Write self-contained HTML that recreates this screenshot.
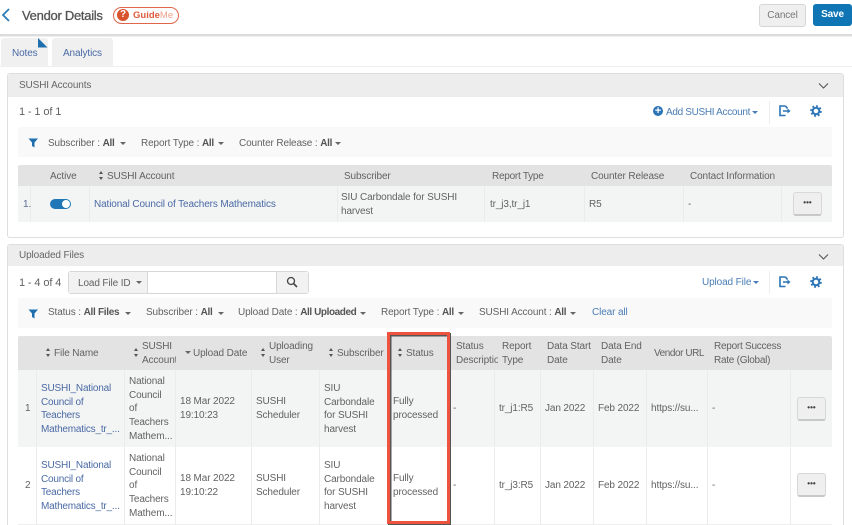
<!DOCTYPE html>
<html><head><meta charset="utf-8"><style>
html,body{margin:0;padding:0;background:#fff;overflow:hidden;width:852px;height:525px}
#w{position:absolute;left:0;top:0;width:852px;height:525px;overflow:hidden;font-family:"Liberation Sans",sans-serif;font-size:10px;letter-spacing:-.12px;line-height:13.7px;color:#626262;filter:blur(.3px)}
#w div,#w svg{position:absolute}
#w .t{white-space:nowrap;margin-top:3px}
.l{color:#4a6aa5}
#w .b{color:#4a7db5}
b{font-weight:bold;color:#555;letter-spacing:-.3px}
#w .car{width:0;height:0;border:3px solid transparent;border-top:3px solid #666;border-bottom:0}
#w .sort{width:5px;height:10px}
.sort:before{content:"";position:absolute;left:0;top:0;border:2.5px solid transparent;border-bottom:3.5px solid #555;border-top:0}
.sort:after{content:"";position:absolute;left:0;top:5.500px;border:2.5px solid transparent;border-top:3.5px solid #555;border-bottom:0}
#w .sep{width:1px;background:#eaecec}
#w .dots{width:27px;height:21px;background:#efefef;border:1px solid #d8d8d8;border-bottom:2px solid #c8c8c8;border-radius:3px;text-align:center;color:#444;font-weight:bold;font-size:8px;line-height:20px;letter-spacing:0}
</style></head><body><div id="w">
<!-- header -->
<svg style="left:0;top:7px" width="12" height="16" viewBox="0 0 12 16"><path d="M9 2 L3 8 L9 14" fill="none" stroke="#2a7fb8" stroke-width="1.800"/></svg>
<div class="t" style="left:22px;top:4px;font-size:13px;line-height:17px;color:#555;letter-spacing:-.28px;-webkit-text-stroke:.3px #555">Vendor Details</div>
<div style="left:113px;top:7px;width:64px;height:15px;border:1px solid #e0654a;border-radius:9px"></div>
<div style="left:117px;top:9px;width:12px;height:12px;border-radius:50%;background:#d9532f;color:#fff;font-size:10px;line-height:12px;text-align:center;font-weight:bold">?</div>
<div class="t" style="left:133px;top:7px;font-size:9.5px;line-height:12px;font-weight:bold;color:#dd5c3c;letter-spacing:0">Guide<span style="font-weight:normal;color:#eba08c">Me</span></div>
<div style="left:759px;top:4px;width:45px;height:21px;background:#efefef;border:1px solid #d6d6d6;border-radius:3px;text-align:center;line-height:21px;color:#777">Cancel</div>
<div style="left:813px;top:4px;width:39px;height:22px;background:#0f75b5;border-radius:3px;text-align:center;line-height:22px;color:#fff;font-weight:bold;font-size:10px">Save</div>
<div style="left:0;top:34px;width:852px;height:2px;background:#dcdcdc"></div>
<div style="left:0;top:36px;width:852px;height:1px;background:#efefef"></div>
<!-- tabs -->
<div style="left:1px;top:38px;width:47px;height:28px;background:#f0f0f0;border-radius:3px 3px 0 0"></div>
<div style="left:52px;top:38px;width:61px;height:28px;background:#f0f0f0;border-radius:3px 3px 0 0"></div>
<svg style="left:38px;top:38px" width="10" height="10"><path d="M0 0 L9.500 9.500 L0 9.500 Z" fill="#1f6fae"/></svg>
<div class="t l" style="left:12px;top:44px">Notes</div>
<div class="t l" style="left:63px;top:44px">Analytics</div>
<div style="left:0;top:66px;width:852px;height:1px;background:#eeeeee"></div>
<!-- panel 1 -->
<div style="left:7px;top:73px;width:835px;height:163px;border:1px solid #dedede;border-radius:3px"></div>
<div style="left:8px;top:74px;width:835px;height:23px;background:#ededed"></div>
<div class="t" style="left:19px;top:76px;color:#666">SUSHI Accounts</div>
<svg style="left:818px;top:82px" width="11" height="8"><path d="M1 1.500 L5.500 6 L10 1.500" fill="none" stroke="#555" stroke-width="1.100"/></svg>
<div class="t" style="left:19px;top:103px;font-size:11px">1 - 1 of 1</div>
<div style="left:653px;top:106px;width:10px;height:10px;border-radius:50%;background:#2a73b5;color:#fff;font-size:11px;line-height:10px;text-align:center;font-weight:bold">+</div>
<div class="t b" style="left:666px;top:103px;letter-spacing:-.32px">Add SUSHI Account</div>
<div class="car" style="left:752px;top:111px;border-top-color:#4a7db5"></div>
<div style="left:769px;top:101px;width:1px;height:23px;background:#eee"></div>
<svg style="left:778px;top:105px" width="13" height="12" viewBox="0 0 13 12"><path d="M7.500 1 H2 V10.500 H7.500" fill="none" stroke="#2a73b5" stroke-width="1.600"/><path d="M7.500 1 L9.500 3.500 M5 6 H10" fill="none" stroke="#2a73b5" stroke-width="1.600"/><path d="M9.500 3.500 L12.500 6 L9.500 8.500 Z" fill="#2a73b5"/></svg>
<svg style="left:810px;top:105px" width="12" height="12" viewBox="0 0 12 12"><circle cx="6" cy="6" r="3.300" fill="none" stroke="#2a73b5" stroke-width="2"/><circle cx="6" cy="6" r="5" fill="none" stroke="#2a73b5" stroke-width="1.600" stroke-dasharray="2 1.900"/></svg>
<!-- filter 1 -->
<div style="left:18px;top:127px;width:814px;height:30px;background:#f9f9f9"></div>
<svg style="left:28px;top:138px" width="11" height="10"><path d="M0.500 0.500 H10 L6.500 4.500 V9.500 L4 8 V4.500 Z" fill="#1f6fae"/></svg>
<div class="t" style="left:48px;top:134px">Subscriber : <b>All</b></div>
<div class="car" style="left:120px;top:142px"></div>
<div class="t" style="left:141px;top:134px">Report Type : <b>All</b></div>
<div class="car" style="left:218px;top:142px"></div>
<div class="t" style="left:239px;top:134px">Counter Release : <b>All</b></div>
<div class="car" style="left:335px;top:142px"></div>
<!-- table 1 -->
<div style="left:18px;top:165px;width:814px;height:21px;background:#e3e3e3;border-radius:2px 2px 0 0"></div>
<div style="left:18px;top:186px;width:814px;height:36px;background:#f3f4f4"></div>
<div class="sep" style="left:30px;top:186px;height:36px"></div>
<div class="sep" style="left:89px;top:186px;height:36px"></div>
<div class="sep" style="left:337px;top:186px;height:36px"></div>
<div class="sep" style="left:484px;top:186px;height:36px"></div>
<div class="sep" style="left:584px;top:186px;height:36px"></div>
<div class="sep" style="left:683px;top:186px;height:36px"></div>
<div class="sep" style="left:781px;top:186px;height:36px"></div>
<div class="t" style="left:50px;top:167px">Active</div>
<div class="sort" style="left:99px;top:171px"></div>
<div class="t" style="left:107px;top:167px">SUSHI Account</div>
<div class="t" style="left:344px;top:167px">Subscriber</div>
<div class="t" style="left:492px;top:167px;letter-spacing:-.25px">Report Type</div>
<div class="t" style="left:591px;top:167px">Counter Release</div>
<div class="t" style="left:690px;top:167px">Contact Information</div>
<div class="t" style="left:23px;top:195px;color:#5a6f96">1.</div>
<div style="left:50px;top:199px;width:21px;height:10px;border-radius:5px;background:#1f77b8"></div>
<div style="left:62px;top:200px;width:8px;height:8px;border-radius:50%;background:#fff"></div>
<div class="t l" style="left:94px;top:195px">National Council of Teachers Mathematics</div>
<div class="t" style="left:341px;top:188px">SIU Carbondale for SUSHI<br>harvest</div>
<div class="t" style="left:490px;top:195px">tr_j3,tr_j1</div>
<div class="t" style="left:589px;top:195px">R5</div>
<div class="t" style="left:688px;top:195px">-</div>
<div class="dots" style="left:793px;top:192px">&bull;&bull;&bull;</div>
<!-- panel 2 -->
<div style="left:7px;top:244px;width:835px;height:290px;border:1px solid #dedede;border-radius:3px"></div>
<div style="left:8px;top:245px;width:835px;height:21px;background:#ededed"></div>
<div class="t" style="left:19px;top:246px;color:#666">Uploaded Files</div>
<svg style="left:818px;top:253px" width="11" height="8"><path d="M1 1.500 L5.500 6 L10 1.500" fill="none" stroke="#555" stroke-width="1.100"/></svg>
<div class="t" style="left:19px;top:274px;font-size:11px">1 - 4 of 4</div>
<div style="left:68px;top:271px;width:239px;height:21px;border:1px solid #d8d8d8;border-radius:3px"></div>
<div style="left:69px;top:272px;width:78px;height:21px;background:#f2f2f2;border-right:1px solid #d8d8d8"></div>
<div style="left:276px;top:272px;width:31px;height:21px;background:#f2f2f2;border-left:1px solid #d8d8d8"></div>
<div class="t" style="left:78px;top:274px">Load File ID</div>
<div class="car" style="left:136px;top:281px"></div>
<svg style="left:286px;top:276px" width="12" height="12"><circle cx="5" cy="5" r="3.500" fill="none" stroke="#444" stroke-width="1.300"/><path d="M7.500 7.500 L11 11" stroke="#444" stroke-width="1.600"/></svg>
<div class="t b" style="left:702px;top:273px">Upload File</div>
<div class="car" style="left:753px;top:281px;border-top-color:#4a7db5"></div>
<div style="left:769px;top:271px;width:1px;height:23px;background:#eee"></div>
<svg style="left:778px;top:276px" width="13" height="12" viewBox="0 0 13 12"><path d="M7.500 1 H2 V10.500 H7.500" fill="none" stroke="#2a73b5" stroke-width="1.600"/><path d="M7.500 1 L9.500 3.500 M5 6 H10" fill="none" stroke="#2a73b5" stroke-width="1.600"/><path d="M9.500 3.500 L12.500 6 L9.500 8.500 Z" fill="#2a73b5"/></svg>
<svg style="left:810px;top:276px" width="12" height="12" viewBox="0 0 12 12"><circle cx="6" cy="6" r="3.300" fill="none" stroke="#2a73b5" stroke-width="2"/><circle cx="6" cy="6" r="5" fill="none" stroke="#2a73b5" stroke-width="1.600" stroke-dasharray="2 1.900"/></svg>
<!-- filter 2 -->
<div style="left:18px;top:298px;width:814px;height:30px;background:#f9f9f9"></div>
<svg style="left:28px;top:309px" width="11" height="10"><path d="M0.500 0.500 H10 L6.500 4.500 V9.500 L4 8 V4.500 Z" fill="#1f6fae"/></svg>
<div class="t" style="left:48px;top:303px">Status : <b>All Files</b></div>
<div class="car" style="left:125px;top:312px"></div>
<div class="t" style="left:146px;top:303px">Subscriber : <b>All</b></div>
<div class="car" style="left:218px;top:312px"></div>
<div class="t" style="left:238px;top:303px">Upload Date : <b style="letter-spacing:-.42px">All Uploaded</b></div>
<div class="car" style="left:360px;top:312px"></div>
<div class="t" style="left:381px;top:303px">Report Type : <b>All</b></div>
<div class="car" style="left:458px;top:312px"></div>
<div class="t" style="left:479px;top:303px">SUSHI Account : <b>All</b></div>
<div class="car" style="left:570px;top:312px"></div>
<div class="t b" style="left:592px;top:303px">Clear all</div>
<!-- table 2 -->
<div style="left:18px;top:336px;width:814px;height:34px;background:#e3e3e3;border-radius:2px 2px 0 0"></div>
<div style="left:18px;top:370px;width:814px;height:77px;background:#f3f4f4"></div>
<div style="left:18px;top:524px;width:814px;height:1px;background:#eee"></div>
<div class="sep" style="left:36px;top:370px;height:155px"></div>
<div class="sep" style="left:124px;top:370px;height:155px"></div>
<div class="sep" style="left:175px;top:370px;height:155px"></div>
<div class="sep" style="left:251px;top:370px;height:155px"></div>
<div class="sep" style="left:319px;top:370px;height:155px"></div>
<div class="sep" style="left:494px;top:370px;height:155px"></div>
<div class="sep" style="left:540px;top:370px;height:155px"></div>
<div class="sep" style="left:593px;top:370px;height:155px"></div>
<div class="sep" style="left:646px;top:370px;height:155px"></div>
<div class="sep" style="left:707px;top:370px;height:155px"></div>
<div class="sep" style="left:790px;top:370px;height:155px"></div>
<div class="sort" style="left:46px;top:348px"></div>
<div class="t" style="left:54px;top:344px">File Name</div>
<div class="sort" style="left:134px;top:348px"></div>
<div class="t" style="left:142px;top:337px;width:34px;overflow:hidden">SUSHI<br>Account</div>
<div class="car" style="left:185px;top:351px"></div>
<div class="t" style="left:193px;top:344px">Upload Date</div>
<div class="sort" style="left:261px;top:348px"></div>
<div class="t" style="left:269px;top:337px">Uploading<br>User</div>
<div class="sort" style="left:329px;top:348px"></div>
<div class="t" style="left:337px;top:344px">Subscriber</div>
<div class="sort" style="left:398px;top:348px"></div>
<div class="t" style="left:406px;top:344px">Status</div>
<div class="t" style="left:456px;top:337px;width:42px;overflow:hidden">Status<br>Description</div>
<div class="t" style="left:502px;top:337px">Report<br>Type</div>
<div class="t" style="left:547px;top:337px">Data Start<br>Date</div>
<div class="t" style="left:601px;top:337px">Data End<br>Date</div>
<div class="t" style="left:654px;top:344px;letter-spacing:-.45px">Vendor URL</div>
<div class="t" style="left:714px;top:337px;letter-spacing:-.25px">Report Success<br>Rate (Global)</div>
<!-- row 1 -->
<div class="t" style="left:25px;top:399px">1</div>
<div class="t l" style="left:41px;top:379px;letter-spacing:-.2px">SUSHI_National<br>Council of<br>Teachers<br>Mathematics_tr_...</div>
<div class="t" style="left:129px;top:372px">National<br>Council<br>of<br>Teachers<br>Mathem...</div>
<div class="t" style="left:180px;top:392px">18 Mar 2022<br>19:10:23</div>
<div class="t" style="left:256px;top:392px">SUSHI<br>Scheduler</div>
<div class="t" style="left:324px;top:379px">SIU<br>Carbondale<br>for SUSHI<br>harvest</div>
<div class="t" style="left:393px;top:392px">Fully<br>processed</div>
<div class="t" style="left:453px;top:399px">-</div>
<div class="t" style="left:499px;top:399px">tr_j1:R5</div>
<div class="t" style="left:545px;top:399px">Jan 2022</div>
<div class="t" style="left:598px;top:399px">Feb 2022</div>
<div class="t" style="left:651px;top:399px">https://su...</div>
<div class="t" style="left:712px;top:399px">-</div>
<div class="dots" style="left:797px;top:397px">&bull;&bull;&bull;</div>
<!-- row 2 -->
<div class="t" style="left:25px;top:476px">2</div>
<div class="t l" style="left:41px;top:456px;letter-spacing:-.2px">SUSHI_National<br>Council of<br>Teachers<br>Mathematics_tr_...</div>
<div class="t" style="left:129px;top:449px">National<br>Council<br>of<br>Teachers<br>Mathem...</div>
<div class="t" style="left:180px;top:469px">18 Mar 2022<br>19:10:22</div>
<div class="t" style="left:256px;top:469px">SUSHI<br>Scheduler</div>
<div class="t" style="left:324px;top:456px">SIU<br>Carbondale<br>for SUSHI<br>harvest</div>
<div class="t" style="left:393px;top:469px">Fully<br>processed</div>
<div class="t" style="left:453px;top:476px">-</div>
<div class="t" style="left:499px;top:476px">tr_j3:R5</div>
<div class="t" style="left:545px;top:476px">Jan 2022</div>
<div class="t" style="left:598px;top:476px">Feb 2022</div>
<div class="t" style="left:651px;top:476px">https://su...</div>
<div class="t" style="left:712px;top:476px">-</div>
<div class="dots" style="left:797px;top:473px">&bull;&bull;&bull;</div>
<!-- red highlight -->
<div style="left:387px;top:332px;width:57px;height:186px;border:3px solid #ee5340;box-shadow:inset 1.500px 1.500px 0 #555,1px 1px 0 #555"></div>
</div></body></html>
